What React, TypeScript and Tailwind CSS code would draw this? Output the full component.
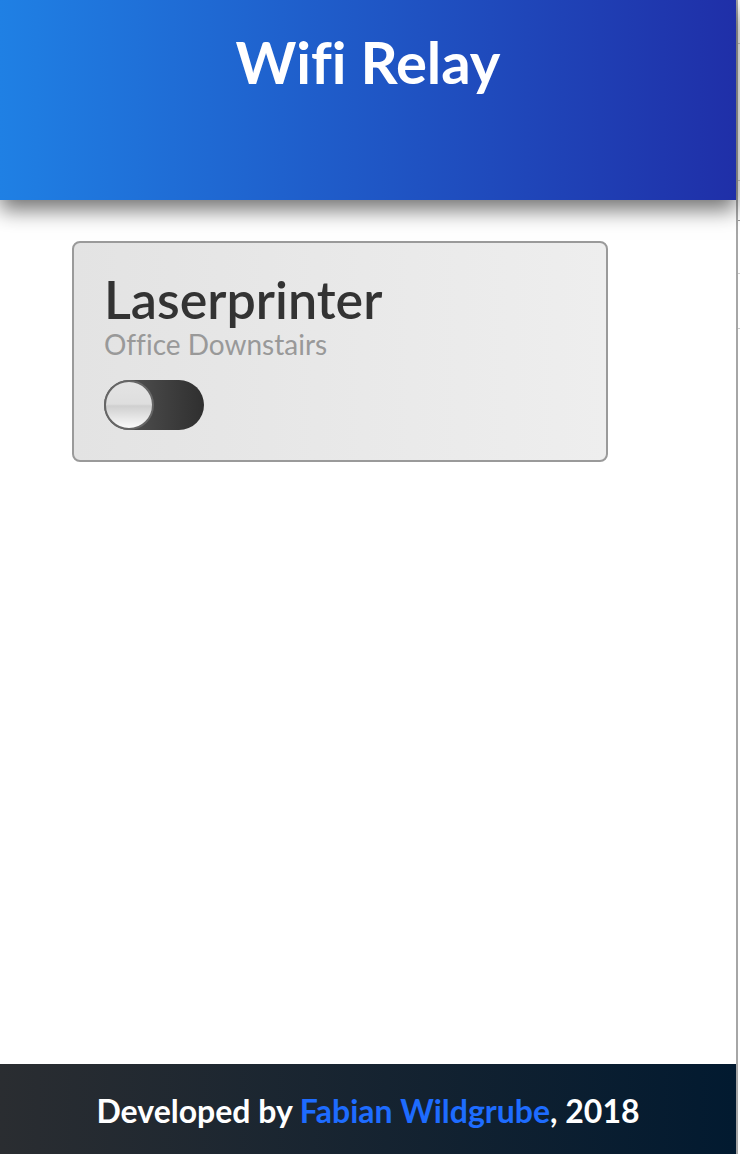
import React from "react";

const font = { fontFamily: "Lato, 'Open Sans', sans-serif" };

function Toggle() {
  return (
    <div className="relative h-[50px] w-[100px] rounded-full bg-[linear-gradient(to_right,#5a5a5a,#2f2f2f)]">
      <div className="absolute top-0 left-0 h-[50px] w-[50px] rounded-full border-2 border-[#666] bg-[linear-gradient(to_bottom,#e4e4e4_0%,#dedede_48%,#cfcfcf_52%,#fbfbfb_100%)]" />
    </div>
  );
}

export default function App() {
  return (
    <div className="flex h-[1154px] w-[740px] bg-white [font-variant-ligatures:none]" style={font}>
      <div className="flex w-[736px] flex-col">
        <header className="relative z-10 h-[200px] bg-[linear-gradient(to_right,#1f80e4,#1f2fa8)] shadow-[0_10px_20px_rgba(0,0,0,0.55)]">
          <h1 className="pt-[27px] text-center text-[58px] leading-[70px] font-bold text-white">
            Wifi Relay
          </h1>
        </header>
        <main className="flex-1 pt-[41px] pl-[72px]">
          <div className="h-[221px] w-[536px] rounded-lg border-2 border-[#9a9a9a] bg-[linear-gradient(to_right,#e3e3e3,#eeeeee)] px-[30px] pt-[30px]">
            <h2 className="text-[52px] leading-[52px] font-semibold text-[#333]">
              Laserprinter
            </h2>
            <p className="mt-[3px] text-[28px] leading-[32px] text-[#999]">
              Office Downstairs
            </p>
            <div className="mt-[20px]">
              <Toggle />
            </div>
          </div>
        </main>
        <footer className="flex h-[90px] items-center justify-center bg-[linear-gradient(to_right,#2a2d31,#021a30)]">
          <p className="pt-[4px] text-[32px] font-bold text-white">
            Developed by <span className="text-[#1e6cff]">Fabian Wildgrube</span>, 2018
          </p>
        </footer>
      </div>
      <div className="relative w-[4px] border-l-2 border-[#a6a6a6] bg-white">
        <div className="absolute top-[43px] left-0 h-px w-[2px] bg-[#ccc]" />
        <div className="absolute top-[180px] left-0 h-px w-[2px] bg-[#ccc]" />
        <div className="absolute top-[220px] left-0 h-px w-[2px] bg-[#999]" />
        <div className="absolute top-[273px] left-0 h-px w-[2px] bg-[#ccc]" />
        <div className="absolute top-[328px] left-0 h-px w-[2px] bg-[#ccc]" />
      </div>
    </div>
  );
}
